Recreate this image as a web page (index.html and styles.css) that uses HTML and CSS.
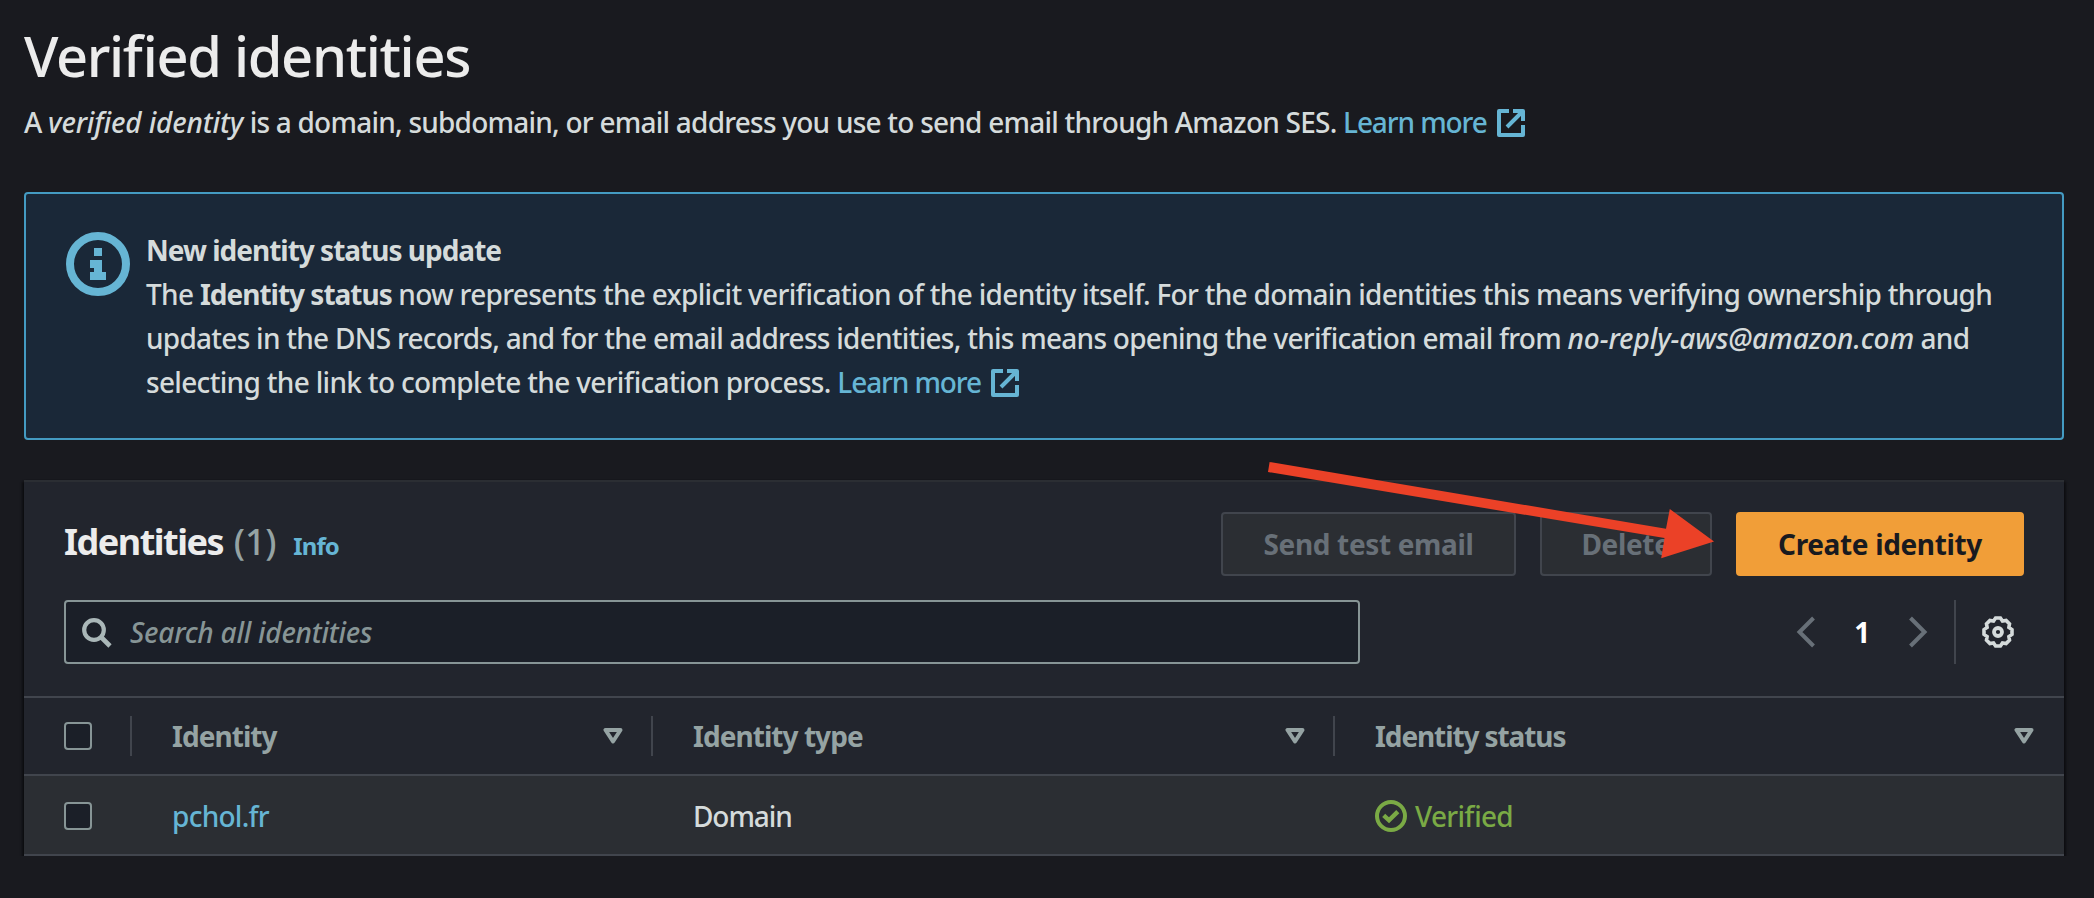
FILE: index.html
```html
<!DOCTYPE html>
<html lang="en">
<head>
<meta charset="utf-8">
<title>Verified identities</title>
<link rel="stylesheet" href="styles.css">
</head>
<body>
<svg class="defs" width="0" height="0">
  <symbol id="external" viewBox="0 0 28 28"><path d="M12 2H2V26H26V16M16 2H26V12M10 18L25 3" fill="none" stroke="currentColor" stroke-width="4" stroke-linejoin="round"/></symbol>
  <symbol id="sort" viewBox="0 0 20 16"><path d="M2.5 2H17.5L10 13.5Z" fill="none" stroke="currentColor" stroke-width="4" stroke-linejoin="round"/></symbol>
</svg>
<main class="page">
  <header class="page-header">
    <h1 class="title">Verified identities</h1>
    <p class="description">A <em>verified identity</em> is a domain, subdomain, or email address you use to send email through Amazon SES. <a class="link">Learn more<svg class="external"><use href="#external"/></svg></a></p>
  </header>

  <section class="alert">
    <svg class="alert-icon" viewBox="0 0 64 64"><circle cx="32" cy="32" r="28" fill="none" stroke="currentColor" stroke-width="8"/><path fill="currentColor" d="M28 16h8v8h-8zM24 28h12v12h4v8H24v-8h4v-4h-4z"/></svg>
    <div class="alert-text">
      <strong>New identity status update</strong>
      <span class="line first">The <strong>Identity status</strong> now represents the explicit verification of the identity itself. For the domain identities this means verifying ownership through</span>
      <span class="line second">updates in the DNS records, and for the email address identities, this means opening the verification email from <em>no-reply-aws@amazon.com</em> and</span>
      <span class="line third">selecting the link to complete the verification process. <a class="link">Learn more<svg class="external"><use href="#external"/></svg></a></span>
    </div>
  </section>

  <section class="panel">
    <div class="panel-top">
      <div class="panel-header">
        <h2 class="panel-title">Identities <span class="count">(1)</span></h2>
        <a class="info">Info</a>
        <div class="actions">
          <button class="button send">Send test email</button>
          <button class="button delete">Delete</button>
          <button class="button primary">Create identity</button>
        </div>
      </div>
      <div class="tools">
        <div class="search">
          <svg class="search-icon" viewBox="0 0 32 32"><circle cx="12" cy="12" r="9.8" fill="none" stroke="currentColor" stroke-width="4.2"/><path d="M18.5 18.5L28 28" stroke="currentColor" stroke-width="4.6"/></svg>
          <span class="placeholder">Search all identities</span>
        </div>
        <div class="pager">
          <svg class="chevron" viewBox="0 0 20 32"><path d="M17.5 2L3.5 16L17.5 30" fill="none" stroke="currentColor" stroke-width="4"/></svg>
          <span class="page-number">1</span>
          <svg class="chevron" viewBox="0 0 20 32"><path d="M2.5 2L16.5 16L2.5 30" fill="none" stroke="currentColor" stroke-width="4"/></svg>
        </div>
        <div class="settings">
          <svg class="gear" viewBox="0 0 32 32"><path d="M30 13.6V18.4L26.9 20.5L27.5 24.1L24.1 27.5L20.5 26.9L18.4 30H13.6L11.5 26.9L7.9 27.5L4.5 24.1L5.1 20.5L2 18.4V13.6L5.1 11.5L4.5 7.9L7.9 4.5L11.5 5.1L13.6 2H18.4L20.5 5.1L24.1 4.5L27.5 7.9L26.9 11.5Z" fill="none" stroke="currentColor" stroke-width="3.6"/><circle cx="16" cy="16" r="4" fill="none" stroke="currentColor" stroke-width="3.8"/></svg>
        </div>
      </div>
    </div>
    <div class="row head">
      <div class="cell select"><i class="checkbox"></i></div>
      <div class="cell">Identity<svg class="sort"><use href="#sort"/></svg></div>
      <div class="cell">Identity type<svg class="sort"><use href="#sort"/></svg></div>
      <div class="cell status">Identity status<svg class="sort"><use href="#sort"/></svg></div>
    </div>
    <div class="row body">
      <div class="cell select"><i class="checkbox"></i></div>
      <div class="cell"><a class="domain-link">pchol.fr</a></div>
      <div class="cell domain">Domain</div>
      <div class="cell verified"><svg class="check" viewBox="0 0 32 32"><circle cx="16" cy="16" r="14" fill="none" stroke="currentColor" stroke-width="4"/><path d="M8.7 15.3L14 20.3L22.8 11.6" fill="none" stroke="currentColor" stroke-width="4.4"/></svg>Verified</div>
    </div>
  </section>
</main>
<svg class="arrow" viewBox="0 0 450 100"><path d="M4.6 2L401 68.7L404.8 49L449 81.5L396.2 98.3L399.5 78L3 12Z" fill="#eb4127"/></svg>
</body>
</html>
```
FILE: styles.css
```css
* { box-sizing: border-box; }
body {
  margin: 0;
  background: #191a1f;
  color: #d5dbdb;
  font: 500 28px/44px "Noto Sans", "Open Sans", sans-serif;
  letter-spacing: -0.73px;
  font-feature-settings: "liga" 1;
  white-space: nowrap;
  overflow: hidden;
}
.defs { position: absolute; }
svg { display: block; flex: none; }
h1, h2, p { margin: 0; }
em { letter-spacing: -0.15px; }
strong { font-weight: 700; letter-spacing: -1px; }
.page { padding: 19px 30px 0 24px; }
.page-header { height: 173px; }
.title { font-size: 56px; line-height: 72px; font-weight: 500; letter-spacing: -1.35px; color: #ececec; }
.description { margin-top: 9px; letter-spacing: -0.77px; }
.link { color: #66b5d4; letter-spacing: -1.1px; }
.external { display: inline-block; width: 28px; height: 28px; margin-left: 10px; vertical-align: -4px; }

.alert {
  display: flex;
  gap: 16px;
  height: 248px;
  padding: 34px 40px 0;
  border: 2px solid #449bc2;
  border-radius: 4px;
  background: #1a2838;
}
.alert-icon { width: 64px; height: 64px; margin-top: 4px; color: #66b5d4; }
.alert-text { display: flex; flex-direction: column; }
.line.first { letter-spacing: -0.69px; }
.line.second { letter-spacing: -0.735px; }
.line.second em { letter-spacing: -0.1px; }
.line.third { letter-spacing: -0.68px; }

.panel {
  margin-top: 40px;
  height: 376px;
  border-top: 2px solid #2b2e33;
  background: #22252d;
  box-shadow: 0 2px 2px #0a0b0e, 2px 2px 2px #101114, -2px 2px 2px #101114;
}
.panel-top { height: 214px; padding: 30px 40px 0; }
.panel-header { display: flex; height: 64px; }
.panel-title { font-size: 36px; line-height: 60px; letter-spacing: -1.5px; color: #ececec; }
.count { margin-left: 3px; font-weight: 500; letter-spacing: -0.2px; color: #95a3a3; }
.info { margin-left: 17px; font-size: 24px; font-weight: 700; line-height: 68px; letter-spacing: -0.9px; color: #66b5d4; }
.actions { display: flex; gap: 24px; margin-left: auto; }
.button {
  height: 64px;
  padding: 0;
  border: 2px solid #41454d;
  border-radius: 4px;
  background: #2b2e33;
  color: #687078;
  font: 700 28px/60px "Noto Sans", "Open Sans", sans-serif;
  letter-spacing: -0.35px;
}
.send { width: 295px; }
.delete { width: 172px; }
.primary { width: 288px; border-color: #f19e38; background: #f19e38; color: #191a1f; }

.tools { display: flex; align-items: center; height: 64px; margin-top: 24px; }
.search {
  display: flex;
  align-items: center;
  width: 1296px;
  height: 64px;
  padding: 0 16px;
  border: 2px solid #879596;
  border-radius: 4px;
  background: #1b1f28;
}
.search-icon { width: 32px; height: 32px; color: #aab7b8; margin-top: 4px; }
.placeholder { margin-left: 16px; font-style: italic; letter-spacing: -0.25px; color: #879596; }
.pager { display: flex; align-items: center; margin-left: auto; color: #687078; }
.chevron { width: 20px; height: 32px; }
.page-number { width: 92px; text-align: center; font-weight: 700; color: #fff; }
.settings { display: flex; align-items: center; height: 64px; margin: 0 10px 0 26px; padding-left: 26px; border-left: 2px solid #41454d; }
.gear { width: 32px; height: 32px; color: #d5dbdb; }

.row {
  display: grid;
  grid-template-columns: 108px 521px 682px 729px;
  align-items: center;
}
.head { height: 80px; border: solid #41454d; border-width: 2px 0; font-weight: 700; letter-spacing: -0.95px; color: #95a3a3; }
.body { height: 80px; padding-top: 2px; border-bottom: 2px solid #41454d; background: #2b2e33; }
.cell { display: flex; align-items: center; height: 40px; padding-left: 40px; border-right: 2px solid transparent; }
.head .cell:not(:last-child) { border-right-color: #41454d; }
.head .status { letter-spacing: -1.1px; }
.sort { width: 20px; height: 16px; margin: 0 28px 0 auto; }
.checkbox { width: 28px; height: 28px; border: 2px solid #879596; border-radius: 4px; background: #1b1f28; }
.domain-link { color: #66b5d4; }
.domain { letter-spacing: -1.1px; }
.verified { color: #7aaa45; }
.check { width: 32px; height: 32px; margin-right: 8px; }

/* Annotation laid over the panel */
.arrow { position: absolute; left: 1265px; top: 460px; width: 450px; height: 100px; }
```
